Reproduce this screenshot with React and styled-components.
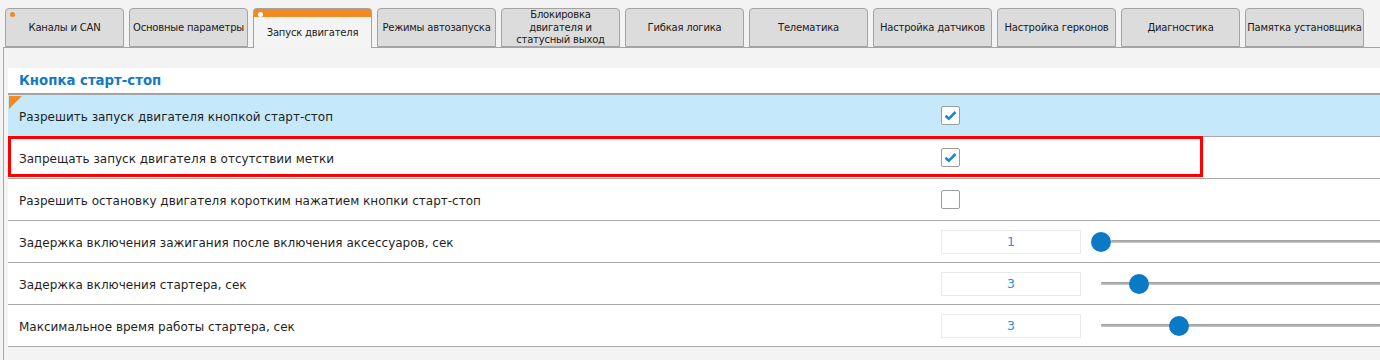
import styled, { createGlobalStyle } from 'styled-components';

const GlobalStyle = createGlobalStyle`
  body {
    margin: 0;
    background: #f3f3f3;
    font-family: "DejaVu Sans", Tahoma, sans-serif;
    overflow: hidden;
  }
`;

const TABS = [
  { lines: ['Каналы и CAN'], marked: true },
  { lines: ['Основные параметры'] },
  { lines: ['Запуск двигателя'], active: true },
  { lines: ['Режимы автозапуска'] },
  { lines: ['Блокировка', 'двигателя и', 'статусный выход'] },
  { lines: ['Гибкая логика'] },
  { lines: ['Телематика'] },
  { lines: ['Настройка датчиков'] },
  { lines: ['Настройка герконов'] },
  { lines: ['Диагностика'] },
  { lines: ['Памятка установщика'] },
];

const ROWS = [
  { label: 'Разрешить запуск двигателя кнопкой старт-стоп', type: 'check', checked: true, selected: true },
  { label: 'Запрещать запуск двигателя в отсутствии метки', type: 'check', checked: true, highlighted: true },
  { label: 'Разрешить остановку двигателя коротким нажатием кнопки старт-стоп', type: 'check', checked: false },
  { label: 'Задержка включения зажигания после включения аксессуаров, сек', type: 'range', value: 1, pos: 0, trackFromThumb: true },
  { label: 'Задержка включения стартера, сек', type: 'range', value: 3, pos: 38 },
  { label: 'Максимальное время работы стартера, сек', type: 'range', value: 3, pos: 78 },
];

function CheckMark() {
  return (
    <svg width="13" height="11" viewBox="0 0 13 11">
      <path d="M1.5 5.8 L4.8 8.8 L11.5 2" fill="none" stroke="#1b87d2" strokeWidth="2.6" strokeLinejoin="miter" />
    </svg>
  );
}

function App() {
  return (
    <>
      <GlobalStyle />
      <Page>
        <TabBar>
          {TABS.map((tab) => (
            <Tab key={tab.lines.join(' ')} $active={tab.active}>
              {tab.marked && <TabDot $color="#f08a24" />}
              {tab.active && <TabDot $color="#ffffff" />}
              <TabLabel>
                {tab.lines.map((line) => (
                  <TabLine key={line}>{line}</TabLine>
                ))}
              </TabLabel>
            </Tab>
          ))}
        </TabBar>

        <Panel>
          <SectionTitle>Кнопка старт-стоп</SectionTitle>
          {ROWS.map((row) => (
            <Row key={row.label} $selected={row.selected}>
              {row.selected && <Corner />}
              {row.highlighted && <Highlight />}
              <Label>{row.label}</Label>
              {row.type === 'check' ? (
                <Checkbox>{row.checked && <CheckMark />}</Checkbox>
              ) : (
                <>
                  <NumberBox>{row.value}</NumberBox>
                  <Slider>
                    <Track $fromThumb={row.trackFromThumb} />
                    <Thumb style={{ left: row.pos }} />
                  </Slider>
                </>
              )}
            </Row>
          ))}
        </Panel>
      </Page>
    </>
  );
}

export default App;

const Page = styled.div`
  padding-top: 8px;
  width: 1380px;
  height: 360px;
`;

const TabBar = styled.div`
  display: flex;
  gap: 5px;
  height: 39px;
  margin-left: 3px;
  padding-left: 2px;
  border-bottom: 1px solid #a3a3a3;
`;

const Tab = styled.div`
  position: relative;
  flex: 0 0 119px;
  box-sizing: border-box;
  height: ${(p) => (p.$active ? '40px' : '39px')};
  display: flex;
  align-items: center;
  justify-content: center;
  padding: ${(p) => (p.$active ? '9px 0 0' : '1px 0 0')};
  border: 1px solid #a3a3a3;
  border-bottom: ${(p) => (p.$active ? 'none' : '1px solid #a3a3a3')};
  border-radius: 4px 4px 0 0;
  background: ${(p) =>
    p.$active ? 'linear-gradient(#f28a22 0, #f28a22 8px, #f4f4f4 8px)' : '#dcdcdc'};
  color: #1a1a1a;
  font-size: 10px;
  letter-spacing: -0.2px;
  line-height: 12.5px;
  text-align: center;
`;

const TabLabel = styled.span`
  display: flex;
  flex-direction: column;
  align-items: center;
`;

const TabLine = styled.span`
  white-space: nowrap;
`;

const TabDot = styled.span`
  position: absolute;
  left: 4px;
  top: 3px;
  width: 5px;
  height: 5px;
  border-radius: 50%;
  background: ${(p) => p.$color};
`;

const Panel = styled.div`
  margin-left: 3px;
  padding: 20px 0 0 4px;
  border-left: 1px solid #a8a8a8;
  height: 300px;
`;

const SectionTitle = styled.div`
  height: 25px;
  padding-left: 11px;
  display: flex;
  align-items: center;
  background: #ffffff;
  border-bottom: 2px solid #a3a3a3;
  color: #1479c2;
  font-size: 13.3px;
  font-weight: bold;
`;

const Row = styled.div`
  position: relative;
  display: grid;
  grid-template-columns: 922px 140px 1fr;
  align-items: center;
  height: 41px;
  padding-left: 11px;
  background: ${(p) => (p.$selected ? '#c5e8fb' : '#ffffff')};
  border-bottom: 1px solid #a8a8a8;
`;

const Corner = styled.span`
  position: absolute;
  left: 1px;
  top: 1px;
  width: 0;
  height: 0;
  border-top: 13px solid #f08a24;
  border-right: 13px solid transparent;
`;

const Highlight = styled.span`
  position: absolute;
  left: 0;
  top: -1px;
  width: 1195px;
  height: 41px;
  box-sizing: border-box;
  border: 3.5px solid #ff0000;
  pointer-events: none;
`;

const Label = styled.span`
  padding-top: 2px;
  color: #1f1f1f;
  font-size: 12px;
  white-space: nowrap;
`;

const Checkbox = styled.span`
  display: flex;
  align-items: center;
  justify-content: center;
  width: 19px;
  height: 19px;
  box-sizing: border-box;
  border: 1px solid #9c9c9c;
  border-radius: 2px;
  background: #ffffff;
`;

const NumberBox = styled.span`
  display: flex;
  align-items: center;
  justify-content: center;
  width: 140px;
  height: 24px;
  box-sizing: border-box;
  border: 1px solid #ebebeb;
  background: #ffffff;
  color: #2a8fda;
  font-size: 12.5px;
`;

const Slider = styled.div`
  position: relative;
  height: 20px;
  margin-left: 20px;
`;

const Track = styled.div`
  position: absolute;
  left: ${(p) => (p.$fromThumb ? '10px' : '0')};
  right: -40px;
  top: 8px;
  height: 3px;
  background: linear-gradient(#9a9a9a, #c8c8c8);
  border-radius: 1px;
`;

const Thumb = styled.div`
  position: absolute;
  top: 0;
  margin-left: -10px;
  width: 20px;
  height: 20px;
  border-radius: 50%;
  background: #0a79c6;
`;
